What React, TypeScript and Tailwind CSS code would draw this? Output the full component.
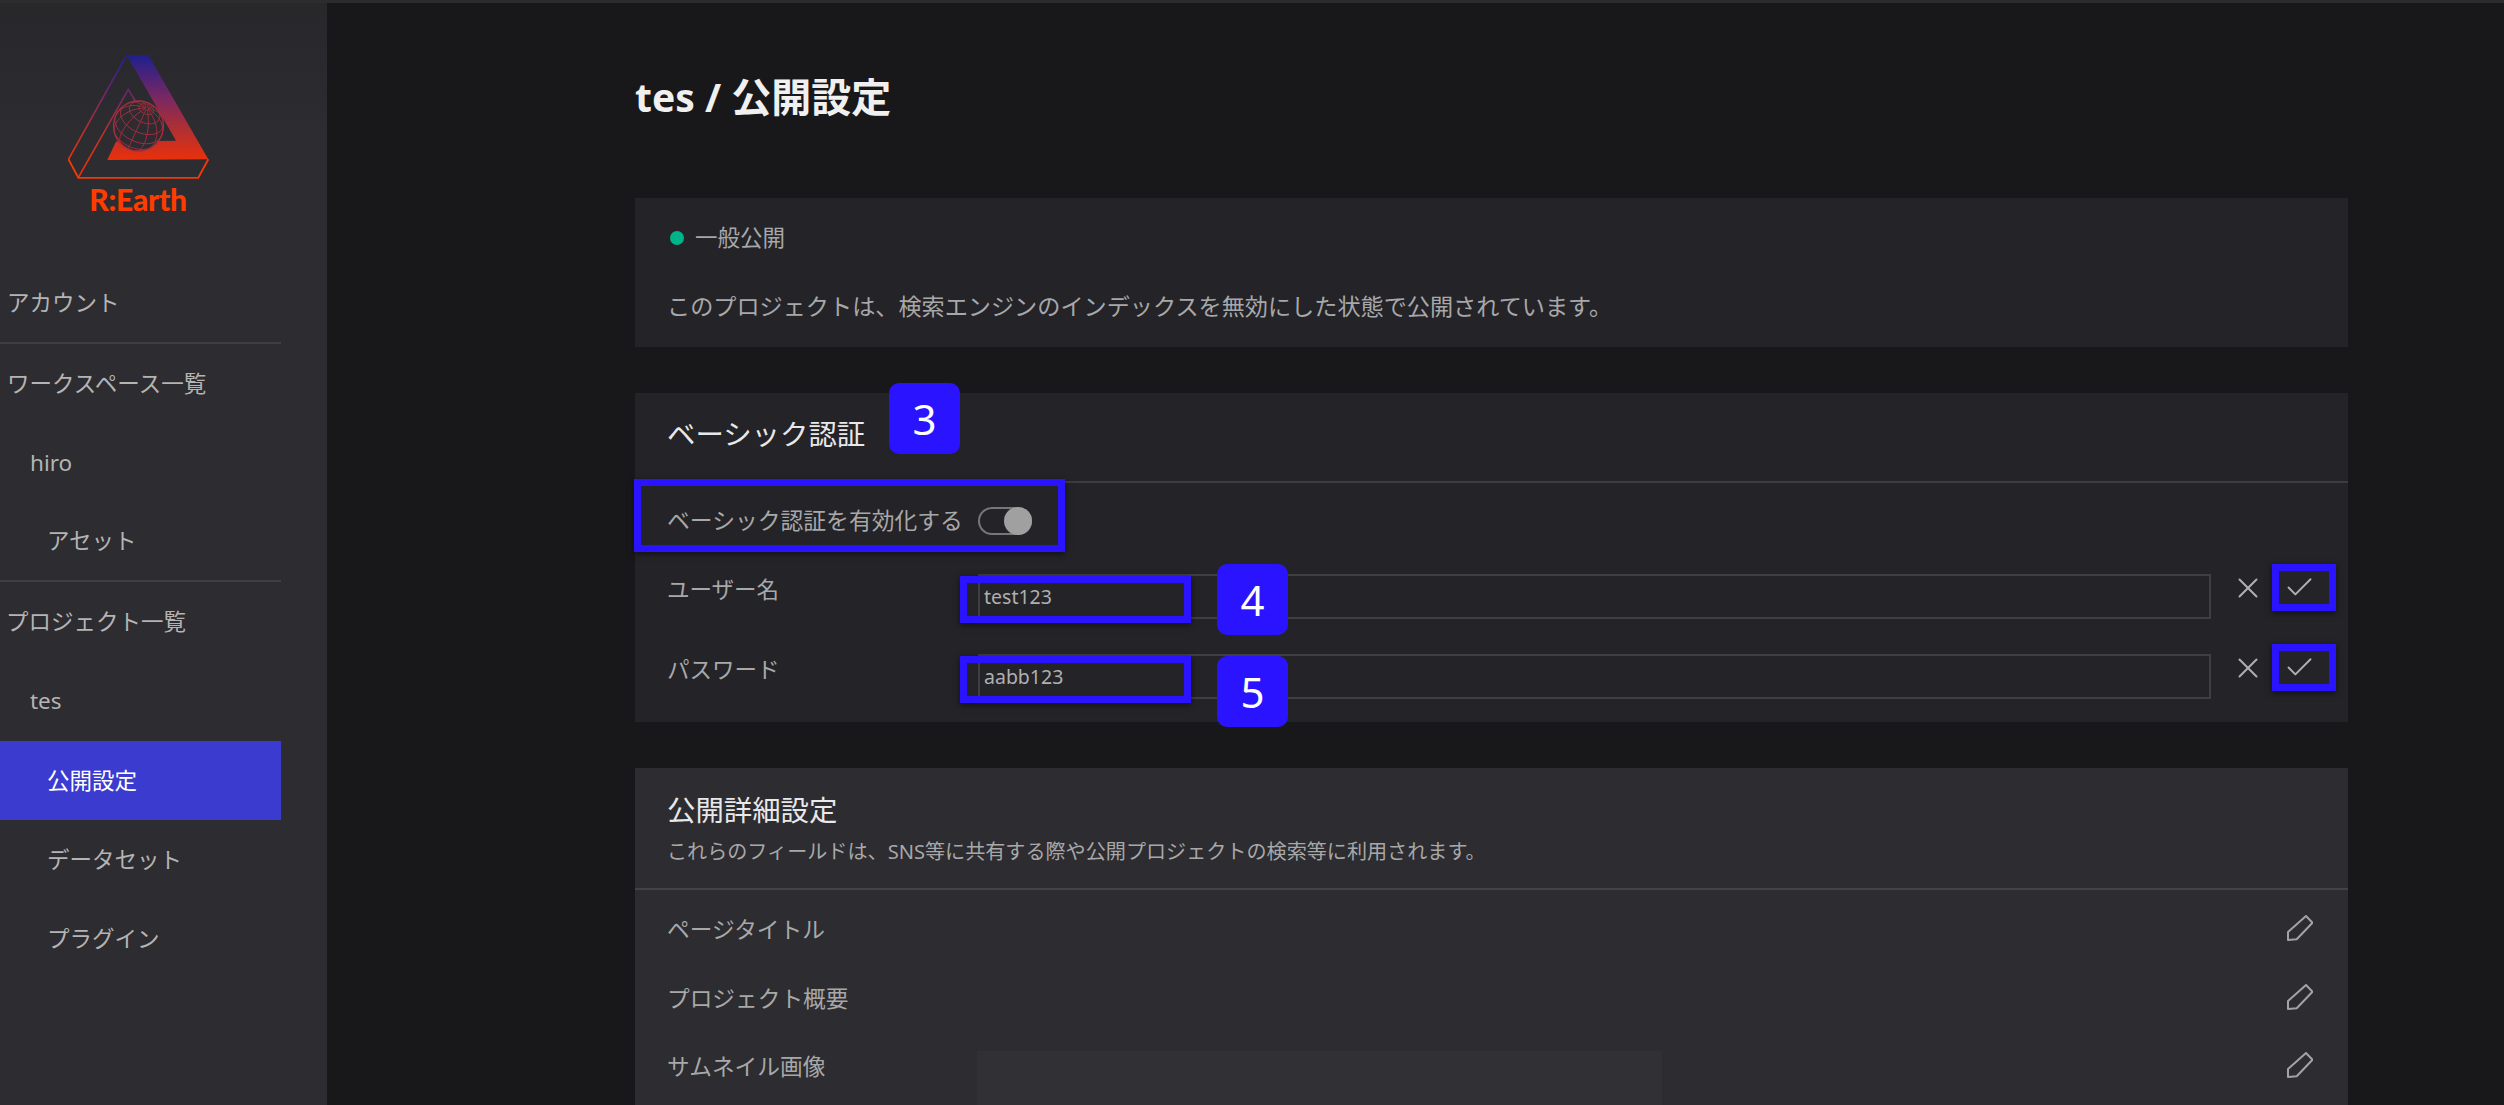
import { Check, X } from "lucide-react";

const FONT = "font-['Noto_Sans','Noto_Sans_CJK_JP',sans-serif]";

const NAV_ITEMS = [
    { label: "アカウント", pad: "pl-[7px]", divider: true },
    { label: "ワークスペース一覧", pad: "pl-[7px]" },
    { label: "hiro", pad: "pl-[30px]" },
    { label: "アセット", pad: "pl-[47px]", divider: true },
    { label: "プロジェクト一覧", pad: "pl-[6px]" },
    { label: "tes", pad: "pl-[30px]" },
    { label: "公開設定", pad: "pl-[47px]", active: true },
    { label: "データセット", pad: "pl-[47px]" },
    { label: "プラグイン", pad: "pl-[47px]" },
];

const DETAIL_ROWS = ["ページタイトル", "プロジェクト概要", "サムネイル画像"];

// orthographic globe, axis tilted toward the upper left
const globeLines = () => {
    const R = 25;
    const tilt = 0.68;
    const turn = -0.43;
    const project = (lat: number, lon: number) => {
        const x0 = Math.cos(lat) * Math.sin(lon);
        const y0 = Math.sin(lat);
        const z0 = Math.cos(lat) * Math.cos(lon);
        const y1 = y0 * Math.cos(tilt) - z0 * Math.sin(tilt);
        const z1 = y0 * Math.sin(tilt) + z0 * Math.cos(tilt);
        const x2 = x0 * Math.cos(turn) - y1 * Math.sin(turn);
        const y2 = x0 * Math.sin(turn) + y1 * Math.cos(turn);
        return { x: R * x2, y: -R * y2, z: z1 };
    };
    const paths: string[] = [];
    const trace = (fn: (t: number) => { x: number; y: number; z: number }) => {
        let d = "";
        let pen = false;
        for (let i = 0; i <= 60; i++) {
            const p = fn(i / 60);
            if (p.z < 0) {
                pen = false;
                continue;
            }
            d += `${pen ? "L" : "M"}${p.x.toFixed(2)} ${p.y.toFixed(2)}`;
            pen = true;
        }
        paths.push(d);
    };
    for (const deg of [-50, -25, 0, 25, 50, 72]) {
        const lat = (deg * Math.PI) / 180;
        trace((t) => project(lat, t * Math.PI * 2));
    }
    for (let m = 0; m < 12; m++) {
        const lon = (m * Math.PI) / 6;
        trace((t) => project(-Math.PI / 2 + t * Math.PI * 0.98, lon));
    }
    return paths;
};

const Logo = () => (
    <div className="pt-[51px] h-[261.5px]">
        <svg width="142" height="126" viewBox="0 0 142 126" className="block ml-[68px]">
            <defs>
                <linearGradient id="logoFade" gradientUnits="userSpaceOnUse" x1="0" y1="1" x2="0" y2="106">
                    <stop offset="0" stopColor="#1f1f8f" />
                    <stop offset="0.42" stopColor="#7c2860" />
                    <stop offset="0.72" stopColor="#b23030" />
                    <stop offset="1" stopColor="#ea300c" />
                </linearGradient>
            </defs>
            <path d="M58.7 1L80.3 1L140.3 105.3L39.3 106L48 87.5L108 86.7Z" fill="url(#logoFade)" />
            <path
                d="M58.7 1L0.5 105.3L10.3 123.7L130.3 123.7L140.3 105.3M10.3 123.7L60.3 35.3L69 50"
                fill="none"
                stroke="url(#logoFade)"
                strokeWidth="1.6"
            />
            <path d="M0.5 105.3L10.3 123.7L130.3 123.7L140.3 105.3" fill="none" stroke="#f03a06" strokeWidth="1.6" />
            <g transform="translate(70.5 72)">
                <circle r="25" fill="#2c2c31" stroke="#a32e3e" strokeWidth="1.3" />
                {globeLines().map((d, i) => (
                    <path key={i} d={d} fill="none" stroke="#a32e3e" strokeWidth="1" />
                ))}
            </g>
        </svg>
        <div className="ml-[68px] w-[140px] mt-[1px] text-center text-[#ff3c00] text-[30px] leading-[36px] font-black font-['Lato',sans-serif] tracking-[-0.3px]">
            R:Earth
        </div>
    </div>
);

const Sidebar = () => (
    <aside className="w-[327px] shrink-0 bg-gradient-to-b from-[#28282b] to-[#2c2c31] to-[12%]">
        <Logo />
        <nav className="w-[281px]">
            {NAV_ITEMS.map((item) => (
                <div
                    key={item.label}
                    className={`h-[79.4px] flex items-center text-[22.5px] ${item.pad} ${
                        item.active ? "bg-[#3b3bd0] text-white" : "text-[#b4b4b4]"
                    } ${item.divider ? "border-b-2 border-[#3f3f43]" : ""}`}
                >
                    {item.label}
                </div>
            ))}
        </nav>
    </aside>
);

const Outline = ({ className }: { className: string }) => (
    <div className={`absolute border-[7px] border-[#2a14ff] shadow-[0_2px_6px_rgba(0,0,0,0.5)] ${className}`} />
);

const Badge = ({ n, className }: { n: number; className: string }) => (
    <div
        className={`absolute w-[71px] h-[71px] rounded-[10px] bg-[#2a14ff] text-white text-[42px] flex items-center justify-center ${className}`}
    >
        {n}
    </div>
);

const Pencil = () => (
    <svg width="26" height="26" viewBox="-1 -1 26 26" fill="none" stroke="#a3a3a3" strokeWidth="2" className="shrink-0">
        <path d="M0 24V16L18 0L24.5 6.7L8.7 23.3Z" strokeLinejoin="round" />
    </svg>
);

const AuthField = ({ label, value }: { label: string; value: string }) => (
    <div className="flex items-start">
        <div className="w-[311px] shrink-0 text-[22.5px] leading-[32px] text-[#a8a8a8]">{label}</div>
        <input
            readOnly
            value={value}
            className="w-[1233px] h-[45px] shrink-0 border-2 border-[#3e3e43] pl-[4px] text-[19.5px] text-[#b0b0b0] outline-none bg-transparent"
        />
        <X size={34} strokeWidth={1.4} className="ml-[20px] -mt-[3px] text-[#b0b0b0] shrink-0" />
        <Check size={33} strokeWidth={1.4} className="ml-[18px] -mt-[3px] text-[#b0b0b0] shrink-0" />
    </div>
);

const AuthCard = () => (
    <section className="relative mt-[46px] h-[329px] bg-[#232328] px-[32px]">
        <h2 className="-mx-[32px] px-[32px] h-[90px] flex items-center pb-[6px] border-b-2 border-[#3c3c41] text-[28.4px] text-[#e8e8e8]">
            ベーシック認証
        </h2>
        <div className="h-[76px] flex items-center text-[22.8px] text-[#a8a8a8]">
            ベーシック認証を有効化する
            <div className="ml-[15px] w-[54px] h-[28px] rounded-full border-2 border-[#77777a] flex justify-end">
                <div className="w-[28px] h-[28px] -my-[2px] -mr-[2px] rounded-full bg-[#a0a0a0]" />
            </div>
        </div>
        <div className="pt-[15px] flex flex-col gap-[35px]">
            <AuthField label="ユーザー名" value="test123" />
            <AuthField label="パスワード" value="aabb123" />
        </div>
        {/* annotations painted over the screenshot */}
        <Outline className="left-[-1px] top-[86px] w-[431px] h-[73px]" />
        <Outline className="left-[325px] top-[183px] w-[231px] h-[47px]" />
        <Outline className="left-[325px] top-[263px] w-[231px] h-[47px]" />
        <Outline className="left-[1637px] top-[171px] w-[64px] h-[47px]" />
        <Outline className="left-[1637px] top-[251px] w-[64px] h-[47px]" />
        <Badge n={3} className="left-[254px] top-[-10px]" />
        <Badge n={4} className="left-[582px] top-[171px]" />
        <Badge n={5} className="left-[582px] top-[263px]" />
    </section>
);

const DetailRow = ({ label, thumb }: { label: string; thumb?: boolean }) => (
    <div className="relative h-[68.5px] flex items-start">
        <div className="w-[310px] shrink-0 text-[22.7px] leading-[36px] pt-[16px] text-[#a8a8a8]">{label}</div>
        {thumb && <div className="w-[685px] h-[200px] mt-[18px] bg-[#303035]" />}
        <div className="absolute right-[35px] top-[19px]">
            <Pencil />
        </div>
    </div>
);

const DetailCard = () => (
    <section className="mt-[46px] h-[400px] bg-[#2c2c31]">
        <div className="h-[122px] px-[32px] pt-[22px] border-b-2 border-[#434347]">
            <h2 className="text-[28.4px] leading-[40px] text-[#e8e8e8]">公開詳細設定</h2>
            <p className="mt-[7px] text-[20.1px] leading-[30px] text-[#a8a8a8]">
                これらのフィールドは、SNS等に共有する際や公開プロジェクトの検索等に利用されます。
            </p>
        </div>
        <div className="pl-[32px] pt-[6px]">
            {DETAIL_ROWS.map((label, i) => (
                <DetailRow key={label} label={label} thumb={i === 2} />
            ))}
        </div>
    </section>
);

export default function App() {
    return (
        <div className={`${FONT} w-full h-[1105px] overflow-hidden bg-[#18181a]`}>
            <div className="h-[3px] bg-[#2c2c2f]" />
            <div className="flex h-[1102px]">
                <Sidebar />
                <main className="pl-[308px] w-[2021px]">
                    <h1 className="mt-[64px] h-[60px] flex items-center text-[39px] font-bold text-[#f0f0f0] whitespace-pre">
                        tes / <span className="text-[40px]">公開設定</span>
                    </h1>
                    <section className="mt-[71px] h-[149px] bg-[#232328] px-[32px] pt-[24px]">
                        <div className="flex items-center h-[32px] text-[22.5px] text-[#a8a8a8]">
                            <span className="w-[14px] h-[14px] ml-[3px] rounded-full bg-[#00b48a] mr-[11px]" />
                            一般公開
                        </div>
                        <p className="mt-[36px] text-[23.15px] leading-[32px] text-[#a8a8a8]">
                            このプロジェクトは、検索エンジンのインデックスを無効にした状態で公開されています。
                        </p>
                    </section>
                    <AuthCard />
                    <DetailCard />
                </main>
            </div>
        </div>
    );
}
